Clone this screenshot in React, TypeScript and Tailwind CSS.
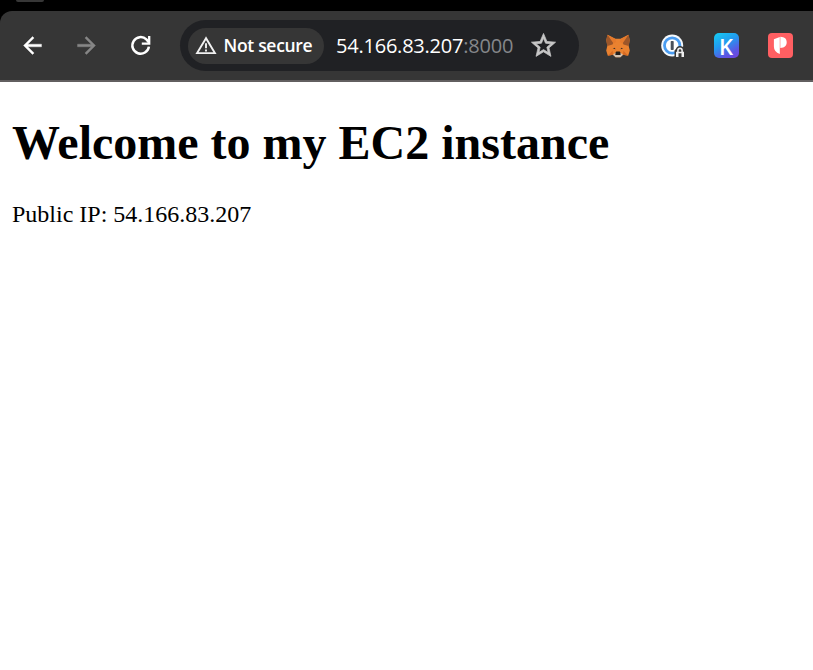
import type { ReactNode } from "react";

function BackIcon() {
  return (
    <svg viewBox="0 0 24 24" className="size-[27px]" fill="currentColor">
      <path d="M20 10.8H7.83l5.59-5.39L12 4l-8 8 8 8 1.42-1.41L7.83 13.2H20z" stroke="currentColor" strokeWidth=".3" />
    </svg>
  );
}

function ReloadIcon() {
  return (
    <svg viewBox="0 0 27 27" className="size-[27px]" fill="none" stroke="currentColor" strokeWidth="2.5">
      <path d="M21.9 14.6A8.3 8.3 0 1 1 19.4 7.4L22 10.4" />
      <path d="M22.2 4v7.7H14.8" strokeWidth="2.3" />
    </svg>
  );
}

function WarningIcon() {
  return (
    <svg viewBox="0 0 22 19" className="h-[19px] w-[22px]" fill="none" stroke="#f1f1f1" strokeWidth="1.9">
      <path d="M11 2.2 2.1 17.1h17.8z" />
      <path d="M11 7.2v5M11 13.5v2" />
    </svg>
  );
}

function StarIcon() {
  return (
    <svg viewBox="0 0 24 24" className="size-[29px]" fill="#c7c7c7" stroke="#c7c7c7" strokeWidth=".6">
      <path d="M22 9.24l-7.19-.62L12 2 9.19 8.63 2 9.24l5.46 4.73L5.82 21 12 17.27 18.18 21l-1.63-7.03L22 9.24zM12 15.4l-3.76 2.27 1-4.28-3.32-2.88 4.38-.38L12 6.1l1.71 4.04 4.38.38-3.32 2.88 1 4.28L12 15.4z" />
    </svg>
  );
}

function FoxIcon() {
  return (
    <svg viewBox="0 0 24 24" className="size-6">
      <path d="M1.5.7 9.2 4.8h5.6L22.5.7 23.7 6l-1 6 1.1 4.5-1.6 5.2-5.2-1-2.6 2.5H9.6L7 20.7l-5.2 1L.2 16.5 1.3 12 .3 6z" fill="#ea8230" />
      <path d="M1.5.7 8.2 7l-1.7 3.5L1.3 12 .3 6zM22.5.7 15.8 7l1.7 3.5 5.2 1.5 1-6z" fill="#9c5629" />
      <path d="m1.5.7 7.7 4.1L10.2 8 7.5 9.5zm21 0-7.7 4.1-1 3.2 2.7 1.5z" fill="#e57a2c" />
      <path d="m6.8 14.6 2-.9.7 1.5zm10.4 0-2-.9-.7 1.5z" fill="#3c3029" />
      <path d="m1.8 21.7 5.2-1-.4-4zm20.4 0L17 20.7l.4-4z" fill="#d66a24" />
      <path d="m7 20.7 2.6-2h4.8l2.6 2-2.6 2.5H9.6z" fill="#d1c1b0" />
      <path d="m9.6 18.3.8-.8h3.2l.8.8.2 2.6H9.4z" fill="#211e1c" />
    </svg>
  );
}

function LockRingIcon() {
  return (
    <svg viewBox="0 0 24 24" className="size-6 translate-x-px">
      <circle cx="11.2" cy="11.5" r="11" fill="#f5f8fb" />
      <circle cx="11.2" cy="11.5" r="7.7" fill="#fff" stroke="#4a9cf0" strokeWidth="2.8" />
      <rect x="9.7" y="7" width="3" height="9" rx=".7" fill="#49515b" />
      <path d="M13.5 24v-7.6l1.4-1.3a4.3 4.3 0 0 1 8.2 0l.9 1.3V24z" fill="#373737" />
      <path d="M15 23v-5.3h1.1v-1.3a2.9 2.9 0 0 1 5.8 0v1.3H23V23z" fill="#eee" />
      <path d="M17.7 17.7v-1.2a1.3 1.3 0 0 1 2.6 0v1.2zM17.5 19.3h3V23h-3z" fill="#373737" />
    </svg>
  );
}

function KIcon() {
  return (
    <span className="flex size-[25px] items-center justify-center rounded-[5px] bg-[linear-gradient(150deg,#16c8f2_5%,#2299ef_42%,#5c55e4_75%,#7440dc)] font-['Open_Sans',sans-serif] text-[22px] leading-none font-semibold text-white">
      K
    </span>
  );
}

function ShieldPIcon() {
  return (
    <svg viewBox="0 0 25 25" className="size-[25px]">
      <rect width="25" height="25" rx="4" fill="#ff5f62" />
      <path d="M5.9 6.2 11.8 3.9v17.2c-3.9-1.6-5.9-4.2-5.9-7.6zM12.3 3.8c4.4.3 6.4 2.2 6.4 5.4s-2 5.4-6.4 5.8z" fill="#fff" />
    </svg>
  );
}

function Extension({ children }: { children: ReactNode }) {
  return <button className="flex h-9 w-[54px] items-center justify-center">{children}</button>;
}

export default function App() {
  return (
    <div className="flex h-[670px] w-[813px] flex-col overflow-hidden bg-white">
      <div className="bg-black">
        <div className="h-[11px] pl-4">
          <div className="h-[2px] w-7 rounded-b-[10px] bg-[#373737]" />
        </div>
        <header className="flex h-[71px] items-center rounded-tl-xl border-b-2 border-[#625f60] bg-[#363636] pl-[5.5px] text-white">
          <nav className="flex w-[174.5px] items-center">
            <button aria-label="Back" className="flex w-[54px] justify-center"><BackIcon /></button>
            <button aria-label="Forward" className="flex w-[54px] justify-center text-[#868686]"><span className="rotate-180"><BackIcon /></span></button>
            <button aria-label="Reload" className="flex w-[54px] justify-center"><ReloadIcon /></button>
          </nav>
          <div className="flex h-[51px] w-[399px] items-center rounded-full bg-[#202124] pl-2 font-['Open_Sans',sans-serif]">
            <div className="flex h-9 w-[136px] items-center rounded-full bg-[#363636] pl-[6.5px]">
              <WarningIcon />
              <span className="ml-[7px] pb-px text-[17.5px] leading-6 font-semibold tracking-[-0.3px] whitespace-nowrap">Not secure</span>
            </div>
            <div className="ml-3 w-[178px] text-[20px] leading-6 tracking-[-0.22px] whitespace-nowrap">
              54.166.83.207<span className="text-[#85878a]">:8000</span>
            </div>
            <span className="ml-[14.5px]"><StarIcon /></span>
          </div>
          <div className="ml-3 flex items-center">
            <Extension><FoxIcon /></Extension>
            <Extension><LockRingIcon /></Extension>
            <Extension><KIcon /></Extension>
            <Extension><ShieldPIcon /></Extension>
          </div>
        </header>
      </div>
      <main className="px-3 pt-[33px] font-['Liberation_Serif',serif] text-black">
        <h1 className="text-[48px] leading-[55px] font-bold whitespace-nowrap">Welcome to my EC2 instance</h1>
        <p className="mt-[31px] text-[24px] leading-[27px]">Public IP: 54.166.83.207</p>
      </main>
    </div>
  );
}
